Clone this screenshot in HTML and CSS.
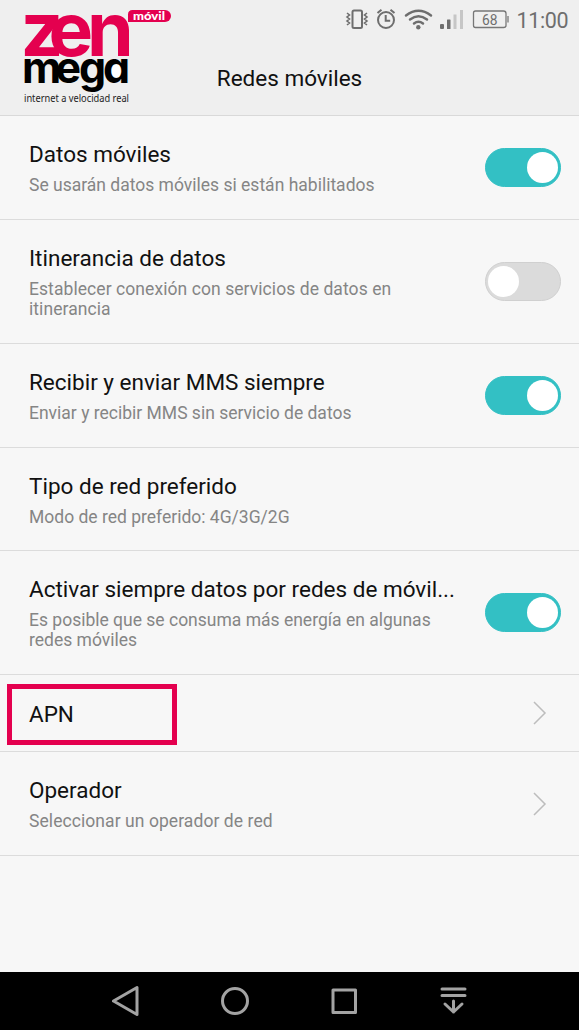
FILE: index.html
```html
<!DOCTYPE html>
<html lang="es">
<head>
<meta charset="utf-8">
<title>Redes móviles</title>
<link rel="stylesheet" href="styles.css">
</head>
<body>
<div class="screen">
  <header class="header">
    <svg class="logo" width="160" height="110" viewBox="20 0 160 110">
      <ellipse class="logo-white" cx="115.500" cy="71.500" rx="8" ry="8.500"/>
      <text class="logo-zen" y="56" x="20.500 48.500 87">zen</text>
      <text class="logo-mega" y="82.500" x="22 55.500 79 103">mega</text>
      <path class="logo-tag" d="M128 22V14.500Q128 10 132.500 10H165A6 6 0 0 1 165 22Z"/>
      <text class="logo-movil" x="133" y="19.800" textLength="32" lengthAdjust="spacingAndGlyphs">móvil</text>
      <text class="logo-line" x="24" y="101.500" textLength="105" lengthAdjust="spacingAndGlyphs">internet a velocidad real</text>
    </svg>
    <div class="status">
      <svg width="240" height="40" viewBox="339 0 240 40">
        <g class="ink">
          <rect x="352.500" y="10.500" width="9.500" height="17.500" rx="1.500"/>
          <path class="thin" d="M347 13l2.500 2-2.500 2 2.500 2-2.500 2 2.500 2-2.500 2M367 13l-2.500 2 2.500 2-2.500 2 2.500 2-2.500 2 2.500 2"/>
          <circle cx="386" cy="20" r="8"/>
          <path d="M385.700 15v5.800h4.500M377.500 13l4-3.300M394.500 13l-4-3.300"/>
          <path class="wave" d="M406 15.500Q418.500 6 431 15.500M410 19.500Q418.500 13 427 19.500M414 23.500Q418.500 20 423 23.500"/>
          <path class="battery" d="M475.500 11h28q2.500 0 2.500 2.500v12q0 2-2.500 2h-28q-2 0-2-2v-12.500q0-2 2-2M508 16v6.500"/>
        </g>
        <g class="solid">
          <circle cx="418.300" cy="27.300" r="2.200"/>
          <rect x="440" y="24" width="4" height="5" rx="1"/>
          <rect x="447" y="19.500" width="3.500" height="9.500" rx=".5"/>
        </g>
        <path class="faint" d="M453.500 14.500h3v14.500h-3zM460 10h3v19h-3z"/>
        <text class="level" x="482" y="25" textLength="15.500" lengthAdjust="spacingAndGlyphs">68</text>
        <text class="clock" x="516.500" y="27.500" textLength="52">11:00</text>
      </svg>
    </div>
    <h1 class="title">Redes móviles</h1>
  </header>
  <main>
    <section class="row">
      <div class="copy"><h2>Datos móviles</h2><p>Se usarán datos móviles si están habilitados</p></div>
      <span class="switch on"></span>
    </section>
    <section class="row tall">
      <div class="copy"><h2>Itinerancia de datos</h2><p class="loose">Establecer conexión con servicios de datos en<br>itinerancia</p></div>
      <span class="switch"></span>
    </section>
    <section class="row">
      <div class="copy"><h2>Recibir y enviar MMS siempre</h2><p>Enviar y recibir MMS sin servicio de datos</p></div>
      <span class="switch on"></span>
    </section>
    <section class="row plain">
      <div class="copy"><h2>Tipo de red preferido</h2><p>Modo de red preferido: 4G/3G/2G</p></div>
    </section>
    <section class="row tall">
      <div class="copy"><h2>Activar siempre datos por redes de móvil...</h2><p>Es posible que se consuma más energía en algunas<br>redes móviles</p></div>
      <span class="switch on"></span>
    </section>
    <section class="row short">
      <div class="copy"><h2>APN</h2></div>
      <svg class="chevron" width="14" height="24" viewBox="0 0 14 24"><path d="M1 1l11 11L1 23"/></svg>
      <span class="highlight"></span>
    </section>
    <section class="row">
      <div class="copy"><h2>Operador</h2><p class="loose">Seleccionar un operador de red</p></div>
      <svg class="chevron" width="14" height="24" viewBox="0 0 14 24"><path d="M1 1l11 11L1 23"/></svg>
    </section>
  </main>
  <nav class="nav">
    <svg width="579" height="58" viewBox="0 972 579 58">
      <path d="M113.500 1001L137 987.500v27zM333 990h22.500v22.500H333z"/>
      <circle cx="235" cy="1001" r="12.500"/>
      <path class="round" d="M442 989h23M442 995.500h23M453.500 1001v11M445 1004l8.500 8 8.500-8"/>
    </svg>
  </nav>
</div>
</body>
</html>
```
FILE: styles.css
```css
body { margin: 0; font-family: Roboto, sans-serif; }
.screen { width: 579px; height: 1030px; display: flex; flex-direction: column; background: #f7f7f7; overflow: hidden; }
.header { display: grid; grid-template-columns: 1fr 240px; grid-template-rows: 40px 75px; flex: none; position: relative; background: #efefef; border-bottom: 1px solid #d9d9d9; }
.logo { position: absolute; left: 20px; top: 0; overflow: visible; }
.status { grid-column: 2; }
.status svg { display: block; }
.title { grid-row: 2; grid-column: 1 / 3; margin: 0; padding-top: 23px; text-align: center; font-size: 22.5px; line-height: 30px; font-weight: 400; color: #111; }
main { flex: 1; }

.row { box-sizing: border-box; position: relative; height: 104px; padding: 0 18px 0 29px; display: flex; align-items: center; justify-content: space-between; border-bottom: 1px solid #dcdcdc; }
.row.plain { height: 103px; }
.row.tall { height: 124px; }
.row.short { height: 77px; }
.copy { white-space: nowrap; }
.copy h2 { margin: 0; font-size: 22.5px; line-height: 28px; font-weight: 400; color: #111; }
.copy p { margin: 7px 0 0; font-size: 17.5px; line-height: 20px; color: #858585; }
.copy .loose { letter-spacing: .07px; }
.short h2 { padding-top: 1px; }
.switch { box-sizing: border-box; width: 76px; height: 39px; padding: 4px; border-radius: 20px; background: #dbdbdb; border: 1px solid #d0d0d0; display: flex; align-items: center; }
.switch::before { content: ""; width: 31px; height: 31px; flex: none; border-radius: 50%; background: #fff; margin-left: -2px; }
.switch.on { background: #33c0c4; border-color: #33c0c4; justify-content: flex-end; }
.switch.on::before { margin: 0 -2px 0 0; }
.chevron { margin-right: 14px; fill: none; stroke: #bdbdbd; stroke-width: 1.5; }
.highlight { position: absolute; box-sizing: border-box; left: 7px; top: 9px; width: 170px; height: 61px; border: 5px solid #e4004f; }

.nav { height: 58px; flex: none; background: #000; }
.nav svg { display: block; fill: none; stroke: #a3a3a3; stroke-width: 3; stroke-linejoin: round; }
.round { stroke-linecap: round; }

.logo-white { fill: #fff; }
.logo-zen, .logo-mega { font-family: Inter, sans-serif; font-weight: 700; font-feature-settings: "cv11"; }
.logo-zen { font-size: 75px; fill: #e4004f; }
.logo-mega { font-size: 43px; fill: #000; }
.logo-tag { fill: #e4004f; }
.logo-movil { font: 900 11.500px Lato, sans-serif; fill: #fff; }
.logo-line { font: 10px "Noto Sans", sans-serif; fill: #222; }

.ink { fill: none; stroke: #6e6e6e; stroke-width: 2; }
.ink .thin { stroke-width: 1.6; }
.ink .wave { stroke-width: 2.500; stroke-linecap: round; }
.ink .battery { stroke-width: 1.300; stroke: #777; }
.solid { fill: #6e6e6e; }
.faint { fill: #c6c6c6; }
.level { font-size: 14px; fill: #6e6e6e; }
.clock { font-size: 21.500px; fill: #6e6e6e; }
```
